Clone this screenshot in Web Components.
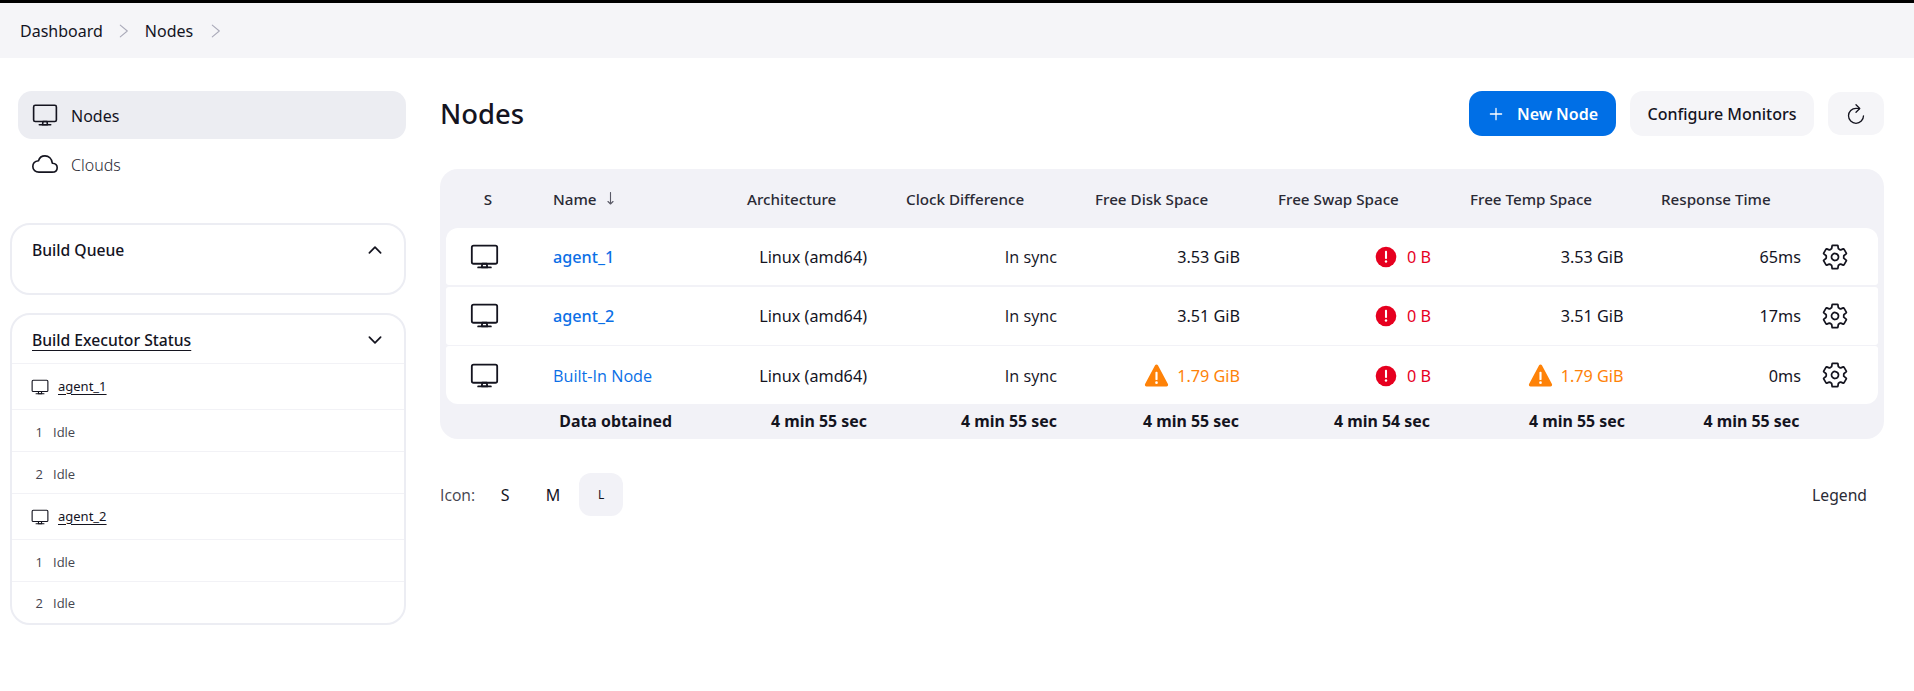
<!DOCTYPE html>
<html lang="en"><head><meta charset="utf-8"><title>Nodes</title>
<style>
html,body{margin:0;padding:0;background:#fff}
body{font-family:"Noto Sans","Open Sans",sans-serif;color:#14141f;font-size:16px;height:691px;overflow:hidden}
</style></head><body>
<jk-page>
  <jk-breadcrumbs slot="top"><a>Dashboard</a><a>Nodes</a></jk-breadcrumbs>
  <jk-side slot="side">
    <jk-task icon="desktop" active>Nodes</jk-task>
    <jk-task icon="cloud">Clouds</jk-task>
    <jk-card title="Build Queue" chev="up" empty></jk-card>
    <jk-card title="Build Executor Status" chev="down" link>
      <jk-exec-node>agent_1</jk-exec-node>
      <jk-exec n="1"></jk-exec>
      <jk-exec n="2"></jk-exec>
      <jk-exec-node>agent_2</jk-exec-node>
      <jk-exec n="1"></jk-exec>
      <jk-exec n="2" last></jk-exec>
    </jk-card>
  </jk-side>
  <jk-main slot="main">
    <jk-header>Nodes</jk-header>
    <jk-table>
      <jk-row kind="head" cells="S|Name|Architecture|Clock Difference|Free Disk Space|Free Swap Space|Free Temp Space|Response Time"></jk-row>
      <jk-row kind="node" first cells="agent_1|Linux (amd64)|In sync|3.53 GiB|!e 0 B|3.53 GiB|65ms"></jk-row>
      <jk-row kind="node" cells="agent_2|Linux (amd64)|In sync|3.51 GiB|!e 0 B|3.51 GiB|17ms"></jk-row>
      <jk-row kind="node" last cells="Built-In Node|Linux (amd64)|In sync|!w 1.79 GiB|!e 0 B|!w 1.79 GiB|0ms"></jk-row>
      <jk-row kind="foot" cells="Data obtained|4 min 55 sec|4 min 55 sec|4 min 55 sec|4 min 54 sec|4 min 55 sec|4 min 55 sec"></jk-row>
    </jk-table>
    <jk-footer></jk-footer>
  </jk-main>
</jk-page>
<script>
const OPEN='"Open Sans","Noto Sans",sans-serif';
const ICONS={
desktop:'<rect x="32" y="64" width="448" height="320" rx="32" ry="32" fill="none" stroke="currentColor" stroke-linejoin="round" stroke-width="32"/><path fill="none" stroke="currentColor" stroke-linecap="round" stroke-linejoin="round" stroke-width="32" d="M304 448l-8-64h-80l-8 64h96z"/><path fill="none" stroke="currentColor" stroke-linecap="round" stroke-linejoin="round" stroke-width="32" d="M368 448H144"/>',
cloud:'<path d="M400 240c-8.89-89.54-71-144-144-144-69 0-113.44 48.2-128 96-60 6-112 43.59-112 112 0 66 54 112 120 112h260c55 0 100-27.44 100-88 0-59.82-53-85.76-96-88z" fill="none" stroke="currentColor" stroke-linejoin="round" stroke-width="32"/>',
gear:'<path d="M262.29 192.31a64 64 0 1057.4 57.4 64.13 64.13 0 00-57.4-57.4zM416.39 256a154.34 154.34 0 01-1.53 20.79l45.21 35.46a10.81 10.81 0 012.45 13.75l-42.77 74a10.81 10.81 0 01-13.14 4.59l-44.9-18.08a16.11 16.11 0 00-15.17 1.75A164.48 164.48 0 01325 400.8a15.94 15.94 0 00-8.82 12.14l-6.73 47.89a11.08 11.08 0 01-10.68 9.17h-85.54a11.11 11.11 0 01-10.69-8.87l-6.72-47.82a16.07 16.07 0 00-9-12.22 155.3 155.3 0 01-21.46-12.57 16 16 0 00-15.11-1.71l-44.89 18.07a10.81 10.81 0 01-13.14-4.58l-42.77-74a10.8 10.8 0 012.45-13.75l38.21-30a16.05 16.05 0 006-14.08c-.36-4.17-.58-8.33-.58-12.5s.21-8.27.58-12.35a16 16 0 00-6.07-13.94l-38.19-30A10.81 10.81 0 0149.48 186l42.77-74a10.81 10.81 0 0113.14-4.59l44.9 18.08a16.11 16.11 0 0015.17-1.75A164.48 164.48 0 01187 111.2a15.94 15.94 0 008.82-12.14l6.73-47.89A11.08 11.08 0 01213.23 42h85.54a11.11 11.11 0 0110.69 8.87l6.72 47.82a16.07 16.07 0 009 12.22 155.3 155.3 0 0121.46 12.57 16 16 0 0015.11 1.71l44.89-18.07a10.81 10.81 0 0113.14 4.58l42.77 74a10.8 10.8 0 01-2.45 13.75l-38.21 30a16.05 16.05 0 00-6.05 14.08c.33 4.14.55 8.3.55 12.47z" fill="none" stroke="currentColor" stroke-linecap="round" stroke-linejoin="round" stroke-width="32"/>',
up:'<path fill="none" stroke="currentColor" stroke-linecap="round" stroke-linejoin="round" stroke-width="44" d="M112 328l144-144 144 144"/>',
down:'<path fill="none" stroke="currentColor" stroke-linecap="round" stroke-linejoin="round" stroke-width="44" d="M112 184l144 144 144-144"/>',
chevron:'<path fill="none" stroke="currentColor" stroke-linecap="round" stroke-linejoin="round" stroke-width="30" d="M150 90l200 166-200 166"/>',
plus:'<path fill="none" stroke="currentColor" stroke-linecap="round" stroke-linejoin="round" stroke-width="36" d="M256 96v320M416 256H96"/>',
reload:'<path d="M320 146s24.36-12-64-12a160 160 0 10160 160" fill="none" stroke="currentColor" stroke-linecap="round" stroke-miterlimit="10" stroke-width="28"/><path fill="none" stroke="currentColor" stroke-linecap="round" stroke-linejoin="round" stroke-width="28" d="M256 58l80 80-80 80"/>',
err:'<circle cx="256" cy="256" r="240" fill="#e6001f"/><rect x="232" y="112" width="48" height="190" rx="20" fill="#fff"/><circle cx="256" cy="360" r="28" fill="#fff"/>',
warn:'<path fill="#fe8208" d="M256 30c12 0 23 6 29 17l205 385c6 11 5 23-1 32s-16 16-28 16H51c-12 0-22-6-28-16s-7-21-1-32L227 47c6-11 17-17 29-17z"/><rect x="234" y="180" width="44" height="170" rx="18" fill="#fff"/><circle cx="256" cy="402" r="27" fill="#fff"/>'
};
const svg=(n,s)=>`<svg xmlns="http://www.w3.org/2000/svg" viewBox="0 0 512 512" width="${s}" height="${s}" style="display:block;flex:none">${ICONS[n]}</svg>`;
function def(name,css,html){
  customElements.define(name,class extends HTMLElement{
    connectedCallback(){
      if(this.shadowRoot)return;
      const r=this.attachShadow({mode:'open'});
      r.innerHTML=`<style>${css}</style>`+(typeof html==='function'?html(this):html);
    }
  });
}
def('jk-page',`:host{display:block}
.body{display:flex;align-items:flex-start}
.side{width:405px;flex:none;padding:33px 0 0 0}
.main{flex:1;min-width:0;padding:33px 30px 0 35px}`,
`<slot name="top"></slot><div class="body"><div class="side"><slot name="side"></slot></div><div class="main"><slot name="main"></slot></div></div>`);
def('jk-breadcrumbs',`:host{display:flex;align-items:center;height:55px;border-top:3px solid #000;background:#f5f5f8;padding-left:20px;font-size:16px;color:#14141f}
.c{color:#a9a9b8;margin:0 12px 0 12px;width:18px}
.c:last-child{margin-left:14px}`,
t=>[...t.querySelectorAll('a')].map(a=>`<span>${a.textContent}</span><span class="c">${svg('chevron',18)}</span>`).join(''));
def('jk-side',`:host{display:block;padding-left:10px}`,`<slot></slot>`);
def('jk-task',`:host{display:flex;align-items:center;height:48px;margin-left:8px;border-radius:14px;padding-left:14px;gap:13px;font-size:16px;width:374px;color:#14141f}
:host([active]){background:#ecedf2}
:host(:not([active])){color:#2a2a35;margin-top:1px;font-weight:300}
.i{color:#14141f;width:26px}
.t{padding-top:1px}`,
t=>`<span class="i">${svg(t.getAttribute('icon'),26)}</span><span class="t"><slot></slot></span>`);
def('jk-card',`:host{display:block;width:392px;border:2px solid #ecedf3;border-radius:20px;box-sizing:content-box;margin-bottom:18px}
:host([empty]){height:68px;margin-top:35px}
.h{display:flex;justify-content:space-between;align-items:center;height:49px;padding:1px 19px 0 20px;box-sizing:border-box;font-size:15.7px;font-weight:500;color:#14141f}
:host([link]) .t{text-decoration:underline;text-underline-offset:4px}
:host([link]) .h{border-bottom:1px solid #f2f2f6}`,
t=>`<div class="h"><span class="t">${t.getAttribute('title')}</span>${svg(t.getAttribute('chev'),20)}</div><slot></slot>`);
def('jk-exec-node',`:host{display:flex;align-items:center;height:45px;border-bottom:1px solid #f2f2f6;padding-left:19px;gap:9px;font-size:13px}
u{text-underline-offset:3px;padding-bottom:2px}`,`${svg('desktop',18)}<u><slot></slot></u>`);
def('jk-exec',`:host{display:flex;align-items:center;border-bottom:1px solid #f2f2f6;font-size:13px;color:#45454f;padding-top:2px;box-sizing:border-box;height:42px;font-family:${OPEN}}
:host([last]){border-bottom:0;height:41px;padding-top:1px}
.n{width:31px;text-align:right;margin-right:10px}`,
t=>`<span class="n">${t.getAttribute('n')}</span><span>Idle</span>`);
def('jk-main',`:host{display:block}`,`<slot></slot>`);
def('jk-header',`:host{display:flex;align-items:center;height:45px;margin-bottom:33px}
h1{margin:0;flex:1;font-size:27.4px;font-weight:500;color:#14141f}
.b{display:flex;align-items:center;justify-content:center;height:45px;border-radius:13px;background:#f5f5f8;font-size:16px;font-weight:500;color:#14141f;box-sizing:border-box}
.p{background:#006fe6;color:#fff;width:147px;gap:12px;font-weight:600;margin-right:14px}
.c{width:184px;margin-right:14px}
.r{width:56px;height:43px}`,
`<h1><slot></slot></h1><div class="b p">${svg('plus',18)}<span>New Node</span></div><div class="b c">Configure Monitors</div><div class="b r">${svg('reload',24)}</div>`);
def('jk-table',`:host{display:flex;flex-direction:column;gap:1.5px;background:#f2f2f7;border-radius:18px;padding:0 6px;height:270px;box-sizing:border-box}`,`<slot></slot>`);
const GRID='84px 198px 159px 190px 183px 191px 194px 176px 57px';
def('jk-row',`:host{display:grid;grid-template-columns:${GRID};align-items:center;font-size:16.2px;color:#14141f;background:#fff;height:58px;border-radius:3px}
:host([first]){border-radius:12px 12px 3px 3px;height:57px}
:host([last]){border-radius:3px 3px 12px 12px}
:host([kind=head]){background:none;height:59px;margin-bottom:-1.5px;color:#2a2a35;font-weight:500;font-size:15.2px}
:host([kind=foot]){background:none;height:33px;margin-top:-1.5px;font-weight:700;font-size:15.9px}
.h{padding-left:19px}
.h.c5,.h.c6{padding-left:18px}
.h.c8{padding-left:16px}
.hs{text-align:center}
.hn{padding-left:23px;display:flex;gap:10px;align-items:center}
.hn svg{display:block}
.s{display:flex;justify-content:center;padding-right:7px;color:#14141f}
.nm{padding-left:23px;color:#0b6fe6;font-weight:500;padding-top:1px}
.v{display:flex;justify-content:flex-end;align-items:center;padding-right:20px;gap:10px}
:host([kind=node]) .v{padding-top:1px}
:host([kind=node]) .v.c7{padding-right:21.5px}
:host([kind=foot]) .v.c7{padding-right:21.5px}
:host([kind=foot]) .v.c4,:host([kind=foot]) .v.c5{padding-right:21px}
.o{font-family:${OPEN}}
.e{color:#e6001f}.w{color:#fe8208;gap:8px}
.g{display:flex;justify-content:flex-start}
.ft{grid-column:1/3;text-align:right;padding-right:56px}`,
t=>{
 const cells=t.getAttribute('cells').split('|'),k=t.getAttribute('kind');
 const val=(c,i)=>{
   const col='c'+(i+3);
   if(c.startsWith('!e '))return `<div class="v e ${col}">${svg('err',22)}<span>${c.slice(3)}</span></div>`;
   if(c.startsWith('!w '))return `<div class="v w ${col}">${svg('warn',25)}<span>${c.slice(3)}</span></div>`;
   return `<div class="v ${col}${c==='In sync'?' o':''}">${c}</div>`;};
 if(k==='head')return cells.map((c,i)=>i===0?`<div class="hs">${c}</div>`:i===1?`<div class="hn"><span>${c}</span><svg width="7" height="13" viewBox="0 0 7 13"><path d="M3.5 .5V12M1 9.5l2.5 2.5L6 9.5" fill="none" stroke="#5a5a66" stroke-width="1.1" stroke-linecap="round" stroke-linejoin="round"/></svg></div>`:`<div class="h c${i+1}">${c}</div>`).join('')+'<div></div>';
 if(k==='foot')return `<div class="ft">${cells[0]}</div>`+cells.slice(1).map((c,i)=>`<div class="v c${i+2}">${c}</div>`).join('');
 return `<div class="s">${svg('desktop',29)}</div><div class="nm${cells[0].startsWith('Built')?' o':''}">${cells[0]}</div>`+cells.slice(1).map(val).join('')+`<div class="g">${svg('gear',28)}</div>`;
});
def('jk-footer',`:host{display:flex;align-items:center;height:43px;margin-top:34px;font-size:15.7px}
.l{color:#45454f;margin-right:6px;font-family:${OPEN}}
.o{width:48px;display:flex;align-items:center;justify-content:center;height:43px;box-sizing:border-box;font-size:16px}
.o.a{background:#f2f2f7;border-radius:12px;font-size:12px;width:44px;margin-left:2px}
.sp{flex:1}
.lg{padding-right:17px;color:#2a2a35}`,
`<span class="l">Icon:</span><span class="o">S</span><span class="o">M</span><span class="o a">L</span><span class="sp"></span><span class="lg">Legend</span>`);
</script>
</body></html>
